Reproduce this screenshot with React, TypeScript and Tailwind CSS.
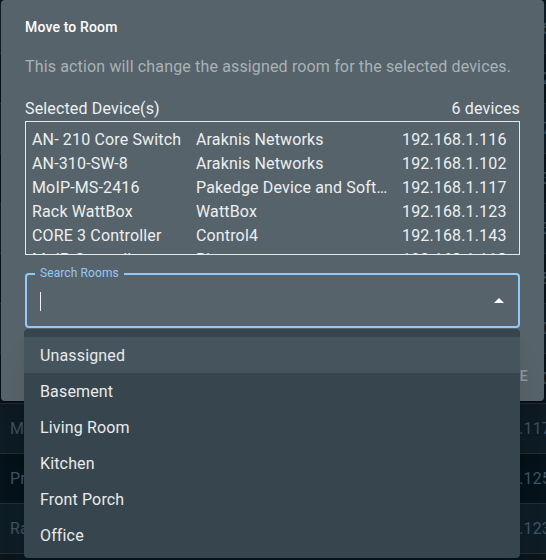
import React from 'react';

const devices = [
  { name: 'AN- 210 Core Switch', maker: 'Araknis Networks', ip: '192.168.1.116' },
  { name: 'AN-310-SW-8', maker: 'Araknis Networks', ip: '192.168.1.102' },
  { name: 'MoIP-MS-2416', maker: 'Pakedge Device and Software', ip: '192.168.1.117' },
  { name: 'Rack WattBox', maker: 'WattBox', ip: '192.168.1.123' },
  { name: 'CORE 3 Controller', maker: 'Control4', ip: '192.168.1.143' },
  { name: 'MoIP Controller', maker: 'Binary', ip: '192.168.1.118' },
];

const rooms = ['Unassigned', 'Basement', 'Living Room', 'Kitchen', 'Front Porch', 'Office', 'Garage'];

// rows of the page behind the dialog
const tableRows = [
  { name: 'AN- 210 Core Switch', ip: '192.168.1.116' },
  { name: 'AN-310-SW-8', ip: '192.168.1.102' },
  { name: 'MoIP-MS-2416', ip: '192.168.1.117' },
  { name: 'Rack WattBox', ip: '192.168.1.123' },
  { name: 'CORE 3 Controller', ip: '192.168.1.143' },
  { name: 'MoIP Controller', ip: '192.168.1.118' },
  { name: 'Kitchen TV', ip: '192.168.1.130' },
  { name: 'Office AP', ip: '192.168.1.110' },
  { name: 'MoIP-RX-1', ip: '192.168.1.117' },
  { name: 'Projector', ip: '192.168.1.125' },
  { name: 'Rack WattBox', ip: '192.168.1.123' },
];

const App = () => {
  return (
    <div className="relative w-[546px] h-[560px] overflow-hidden bg-[#0a161e] font-['Roboto',sans-serif] tracking-[0.15px]">
      {/* Page behind */}
      <div className="pt-[4px] w-[560px]">
        {tableRows.map((row, i) => (
          <div
            key={i}
            className={`h-[50px] flex items-center justify-between pl-[10px] pr-[9px] border-b border-[#2c2a2a] text-[16px] text-[#3d5465] ${i % 2 === 0 ? 'bg-[#0e1c25]' : 'bg-[#06121a]'}`}
          >
            <span>{row.name}</span>
            <span>{row.ip}</span>
          </div>
        ))}
      </div>

      {/* Dialog */}
      <div className="absolute top-0 left-[1px] w-[543px] h-[401px] rounded-[4px] bg-[#57636a] shadow-2xl">
        <div className="px-[24px] pt-[17px]">
          <h2 className="text-[14px] leading-[20px] font-medium text-white">Move to Room</h2>
          <p className="mt-[18px] text-[16px] leading-[24px] text-[#a9b2b7]">
            This action will change the assigned room for the selected devices.
          </p>

          <div className="mt-[18px] flex justify-between text-[16px] leading-[24px] text-[#eceff1]">
            <span>Selected Device(s)</span>
            <span>6 devices</span>
          </div>

          <div className="h-[134px] border border-[#e6e8e9] overflow-hidden pt-[6px] pl-[6px]">
            {devices.map((d) => (
              <div key={d.ip} className="grid grid-cols-[164px_206px_1fr] text-[16px] leading-[24px] text-[#eceff1]">
                <span className="truncate">{d.name}</span>
                <span className="truncate pr-[14px]">{d.maker}</span>
                <span>{d.ip}</span>
              </div>
            ))}
          </div>

          {/* Search field */}
          <div className="relative mt-[18px] h-[55px] border-2 border-[#90caf9] rounded-[4px] flex items-center pl-[13px] pr-[7px]">
            <span className="absolute -top-[10px] left-[8px] px-[5px] bg-[#57636a] text-[12px] leading-[16px] tracking-[0.1px] text-[#90caf9]">
              Search Rooms
            </span>
            <div className="w-[1px] h-[19px] bg-[#f2f2f2] mt-[2px]" />
            <svg className="ml-auto w-[24px] h-[24px] mt-[1px]" viewBox="0 0 24 24" fill="#ffffff">
              <path d="M7 14l5-5 5 5z" />
            </svg>

            {/* Listbox */}
            <div className="absolute top-[calc(100%+3px)] left-[-3px] w-[496px] h-[229px] rounded-[4px] bg-[#37464e] py-[8px] overflow-hidden shadow-xl">
              {rooms.map((room, i) => (
                <div
                  key={room}
                  className={`h-[36px] flex items-center pl-[16px] pt-[2px] text-[16px] text-[#e8eaeb] ${i === 0 ? 'bg-[#46555d]' : ''}`}
                >
                  {room}
                </div>
              ))}
            </div>
          </div>
        </div>

        <div className="flex justify-end gap-[8px] px-[8px] pt-[30px]">
          <button className="px-[8px] h-[36px] text-[14px] font-medium tracking-wide text-[#90caf9]">CANCEL</button>
          <button className="px-[8px] h-[36px] text-[14px] font-medium tracking-wide text-[#8f999e]">MOVE</button>
        </div>
      </div>
    </div>
  );
};

export default App;
